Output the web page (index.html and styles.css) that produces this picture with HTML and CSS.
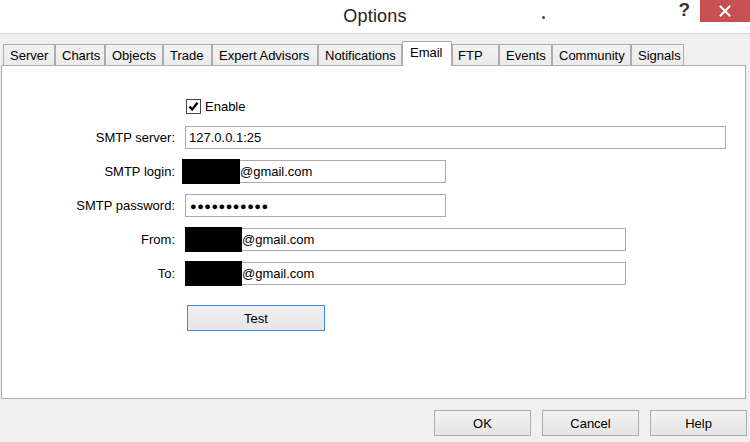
FILE: index.html
```html
<!DOCTYPE html>
<html>
<head>
<meta charset="utf-8">
<title>Options</title>
<link rel="stylesheet" href="styles.css">
</head>
<body>
<div class="window">
  <div class="titlebar">
    <div class="tb-left"></div>
    <div class="tb-title">Options</div>
    <div class="tb-right">
      <span class="dot"></span>
      <span class="help-q">?</span>
      <span class="close-btn">
        <svg width="12" height="12" viewBox="0 0 12 12"><path d="M1.5 1.5 L10.5 10.5 M10.5 1.5 L1.5 10.5" stroke="#fff" stroke-width="2" stroke-linecap="square"/></svg>
      </span>
    </div>
  </div>

  <div class="tabs">
    <div class="tab t-server">Server</div>
    <div class="tab t-charts">Charts</div>
    <div class="tab t-objects">Objects</div>
    <div class="tab t-trade">Trade</div>
    <div class="tab t-ea">Expert Advisors</div>
    <div class="tab t-notif">Notifications</div>
    <div class="tab tab-active t-email">Email</div>
    <div class="tab t-ftp">FTP</div>
    <div class="tab t-events">Events</div>
    <div class="tab t-community">Community</div>
    <div class="tab t-signals">Signals</div>
  </div>

  <div class="panel">
    <div class="enable-row">
      <span class="checkbox">
        <svg width="13" height="13" viewBox="0 0 13 13"><path d="M2.5 6.5 L5.2 9.5 L10.5 2.8" fill="none" stroke="#000" stroke-width="2.4" stroke-linejoin="miter"/></svg>
      </span>
      <span class="enable-label">Enable</span>
    </div>

    <div class="row row-first">
      <span class="label">SMTP server:</span>
      <div class="field w-long"><span class="val">127.0.0.1:25</span></div>
    </div>
    <div class="row">
      <span class="label">SMTP login:</span>
      <div class="field w-short"><span class="redact redact-login"></span><span class="val-after">@gmail.com</span></div>
    </div>
    <div class="row">
      <span class="label">SMTP password:</span>
      <div class="field w-short"><span class="val pwd">●●●●●●●●●●●</span></div>
    </div>
    <div class="row">
      <span class="label">From:</span>
      <div class="field w-mid"><span class="redact"></span><span class="val-after">@gmail.com</span></div>
    </div>
    <div class="row">
      <span class="label">To:</span>
      <div class="field w-mid"><span class="redact"></span><span class="val-after">@gmail.com</span></div>
    </div>

    <div class="test-row">
      <button class="btn btn-test">Test</button>
    </div>
  </div>

  <div class="footer">
    <button class="btn btn-foot">OK</button>
    <button class="btn btn-foot">Cancel</button>
    <button class="btn btn-foot">Help</button>
  </div>
</div>
</body>
</html>
```

FILE: styles.css
```css
* { box-sizing: border-box; }

html, body {
  margin: 0;
  padding: 0;
}

body {
  width: 750px;
  height: 442px;
  overflow: hidden;
  background: #f0f0f0;
  font-family: "Liberation Sans", Arial, sans-serif;
  font-size: 13px;
  color: #000;
}

.window {
  width: 750px;
  height: 442px;
  display: flex;
  flex-direction: column;
}

/* Title bar */
.titlebar {
  height: 34px;
  background: #fff;
  border-bottom: 1px solid #d9d9d9;
  display: grid;
  grid-template-columns: 1fr auto 1fr;
  align-items: start;
}

.tb-title {
  font-size: 18px;
  color: #222;
  padding-top: 6px;
  letter-spacing: 0.2px;
}

.tb-right {
  display: flex;
  align-items: flex-start;
  height: 100%;
}

.dot {
  width: 3px;
  height: 3px;
  border-radius: 50%;
  background: #444;
  margin-left: 135px;
  margin-top: 16px;
}

.help-q {
  margin-left: auto;
  font-size: 19px;
  font-weight: bold;
  color: #333;
  margin-top: -1px;
  margin-right: 10px;
}

.close-btn {
  width: 50px;
  height: 22px;
  background: #c75050;
  display: flex;
  align-items: center;
  justify-content: center;
}

/* Tabs */
.tabs {
  display: flex;
  align-items: flex-end;
  padding-left: 3px;
  height: 31px;
  position: relative;
  z-index: 1;
}

.tab {
  height: 21px;
  border: 1px solid #acacac;
  border-bottom: none;
  background: linear-gradient(#f3f3f3, #ebebeb);
  padding-left: 6px;
  line-height: 21px;
  font-size: 13px;
  white-space: nowrap;
  color: #000;
}

.tab-active {
  height: 25px;
  background: #fff;
  margin-bottom: -1px;
  padding-left: 7px;
  line-height: 21px;
}

.t-server { width: 52px; }
.t-charts { width: 50px; }
.t-objects { width: 58px; }
.t-trade { width: 49px; }
.t-ea { width: 106px; }
.t-notif { width: 84px; }
.t-email { width: 50px; }
.t-ftp { width: 47px; padding-left: 5px; }
.t-events { width: 53px; }
.t-community { width: 79px; }
.t-signals { width: 53px; }

/* Panel */
.panel {
  margin-left: 1px;
  width: 745px;
  height: 334px;
  background: #fff;
  border: 1px solid #adadad;
  padding-left: 0;
}

.enable-row {
  display: flex;
  align-items: center;
  margin-top: 33px;
  padding-left: 184px;
  height: 15px;
}

.checkbox {
  width: 15px;
  height: 15px;
  border: 1px solid #444;
  background: #fff;
  display: flex;
  align-items: center;
  justify-content: center;
}

.enable-label {
  margin-left: 4px;
}

.row {
  display: flex;
  align-items: center;
  height: 23px;
  margin-top: 11px;
}

.row-first {
  margin-top: 12px;
}

.label {
  width: 174px;
  text-align: right;
  padding-right: 1px;
  flex: none;
}

.field {
  margin-left: 9px;
  height: 23px;
  border: 1px solid #ababab;
  background: #fff;
  display: flex;
  align-items: center;
}

.w-long { width: 541px; }
.w-short { width: 261px; }
.w-mid { width: 441px; }

.val {
  padding-left: 3px;
}

.pwd {
  font-size: 11px;
  letter-spacing: 0.5px;
  padding-left: 4px;
}

.redact {
  width: 57px;
  height: 25px;
  background: #000;
  margin-left: -1px;
  flex: none;
}

.redact-login {
  margin-left: -4px;
  width: 58px;
}

.val-after {
  margin-left: 0;
}

/* Test button */
.test-row {
  margin-top: 20px;
  padding-left: 185px;
}

.btn {
  font-family: "Liberation Sans", Arial, sans-serif;
  font-size: 13px;
  color: #000;
  background: linear-gradient(#f2f2f2, #e5e5e5);
  border: 1px solid #acacac;
  padding: 0;
  margin: 0;
}

.btn-test {
  width: 138px;
  height: 26px;
  border-color: #3c8de0;
  background: linear-gradient(#f0f0f0, #e6e6e6);
}

/* Footer */
.footer {
  display: flex;
  justify-content: flex-end;
  gap: 11px;
  padding-right: 3px;
  margin-top: 11px;
}

.btn-foot {
  width: 97px;
  height: 26px;
}
```
